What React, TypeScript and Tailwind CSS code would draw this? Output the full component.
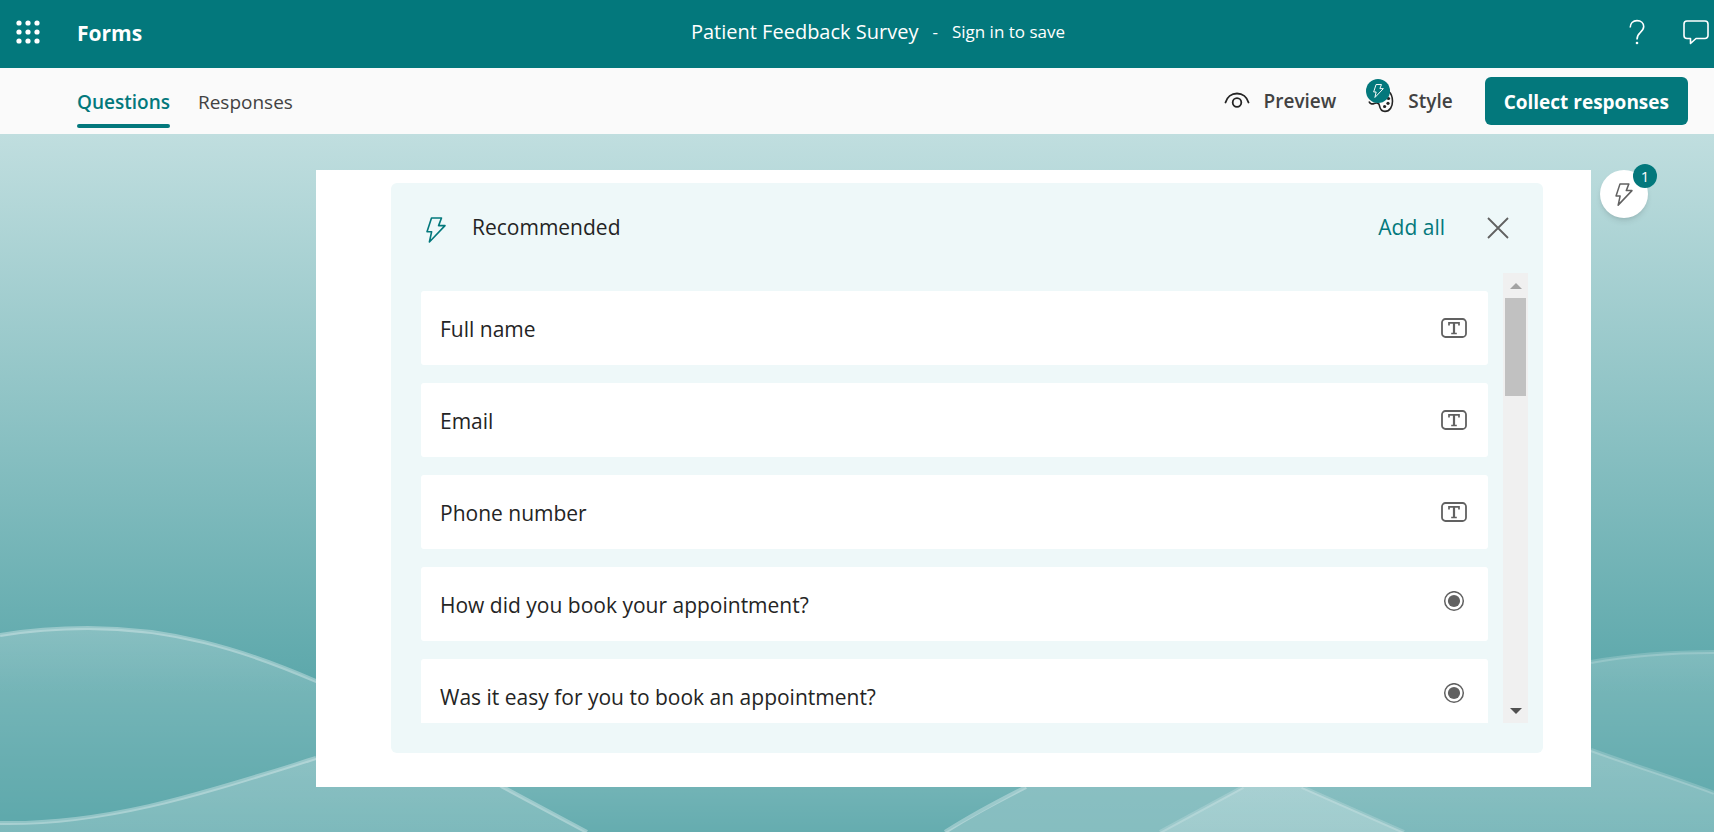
import React from "react";

type IconKind = "text" | "choice";

const questions: { label: string; kind: IconKind }[] = [
  { label: "Full name", kind: "text" },
  { label: "Email", kind: "text" },
  { label: "Phone number", kind: "text" },
  { label: "How did you book your appointment?", kind: "choice" },
  { label: "Was it easy for you to book an appointment?", kind: "choice" },
];

function Bolt({ className, strokeWidth = 1.5 }: { className: string; strokeWidth?: number }) {
  return (
    <svg viewBox="0 0 20 26" fill="none" stroke="currentColor" strokeWidth={strokeWidth} strokeLinejoin="round" className={className} aria-hidden="true">
      <path d="M5.5 1h10L12.6 8.6H19L3.4 25 5.6 14.8H1Z" />
    </svg>
  );
}

function Waffle() {
  return (
    <svg viewBox="0 0 24 24" className="size-6" fill="#fff" aria-hidden="true">
      {[3, 12, 21].map((y) => [3, 12, 21].map((x) => <circle key={`${x}-${y}`} cx={x} cy={y} r="2.6" />))}
    </svg>
  );
}

function KindIcon({ kind }: { kind: IconKind }) {
  if (kind === "text") {
    return (
      <svg viewBox="0 0 26 26" className="size-[26px] shrink-0" fill="none" stroke="#616161" aria-hidden="true">
        <rect x="1" y="4" width="24" height="18" rx="3.5" strokeWidth="1.8" />
        <path d="M8 10.500V7.900h10v2.600M10.200 18.500h5.600" strokeWidth="1.7" />
        <path d="M13 8v10.500" strokeWidth="2.2" />
      </svg>
    );
  }
  return (
    <svg viewBox="0 0 26 26" className="size-[26px] shrink-0" aria-hidden="true">
      <circle cx="13" cy="10" r="9.3" fill="none" stroke="#616161" strokeWidth="1.5" />
      <circle cx="13" cy="10" r="6.1" fill="#616161" />
    </svg>
  );
}

function Waves() {
  return (
    <svg viewBox="0 0 1714 698" preserveAspectRatio="none" className="absolute inset-0 size-full" fill="none" aria-hidden="true">
      <defs>
        <linearGradient id="sky" x1="0" y1="0" x2="0" y2="1">
          <stop offset="0" stopColor="#c0dedf" />
          <stop offset="0.8" stopColor="#5ba7aa" />
          <stop offset="1" stopColor="#5ba7aa" />
        </linearGradient>
        <linearGradient id="upper" gradientUnits="userSpaceOnUse" x1="0" y1="494" x2="0" y2="698">
          <stop offset="0" stopColor="#fff" stopOpacity="0.22" />
          <stop offset="1" stopColor="#fff" stopOpacity="0.01" />
        </linearGradient>
        <linearGradient id="middle" gradientUnits="userSpaceOnUse" x1="0" y1="620" x2="0" y2="710">
          <stop offset="0" stopColor="#fff" stopOpacity="0.2" />
          <stop offset="1" stopColor="#fff" stopOpacity="0.04" />
        </linearGradient>
        <linearGradient id="lower" gradientUnits="userSpaceOnUse" x1="0" y1="610" x2="0" y2="698">
          <stop offset="0" stopColor="#fff" stopOpacity="0.24" />
          <stop offset="1" stopColor="#fff" stopOpacity="0.2" />
        </linearGradient>
      </defs>
      <rect width="1714" height="698" fill="url(#sky)" />
      <path d="M0 501C30 496 60 494 88 494C170 494 240 514 316 547C390 580 450 620 503 653L587 698H0Z" fill="url(#upper)" />
      <path d="M1160 698L1243 653C1340 580 1470 546 1591 528C1630 521 1670 518 1714 518V698Z" fill="url(#upper)" />
      <path d="M503 653L560 600H980L1026 653L945 698H587Z" fill="url(#middle)" />
      <path d="M0 689C110 691 210 657 316 624C400 600 450 620 503 653L587 698H0Z" fill="url(#lower)" />
      <path d="M945 698L1026 653C1110 600 1220 600 1302 653L1404 698Z" fill="url(#lower)" />
      <path d="M1026 653C1110 600 1220 600 1302 653L1404 698H945Z" fill="#fff" fillOpacity="0.08" />
      <path d="M1160 698L1243 653C1350 570 1480 575 1591 616C1635 632 1680 646 1714 659V698Z" fill="url(#lower)" />
      <g stroke="#fff" strokeOpacity="0.32" strokeWidth="4">
        <path d="M0 501C30 496 60 494 88 494C170 494 240 514 316 547C390 580 450 620 503 653L587 698" />
        <path d="M0 689C110 691 210 657 316 624" />
        <path d="M945 698C970 682 998 667 1026 653" />
      </g>
      <g stroke="#fff" strokeOpacity="0.18" strokeWidth="4">
        <path d="M1160 698L1243 653" />
        <path d="M1302 653L1404 698" />
        <path d="M1591 528C1630 521 1670 518 1714 518" />
        <path d="M1591 616C1635 632 1680 646 1714 659" />
      </g>
    </svg>
  );
}

function Header() {
  return (
    <header className="grid h-17 grid-cols-[1fr_auto_1fr] items-center bg-[#03787c] pb-1 text-white">
      <div className="flex items-center gap-[37px] pl-4">
        <button type="button" aria-label="App launcher">
          <Waffle />
        </button>
        <a href="#forms" className="pt-1 text-[21px] font-bold">Forms</a>
      </div>
      <div className="flex items-center gap-[14px] pl-[42px]">
        <h1 className="text-[20px]">Patient Feedback Survey</h1>
        <span className="text-[17px]">-</span>
        <a href="#signin" className="text-[17px]">Sign in to save</a>
      </div>
      <div className="flex items-center justify-end gap-[38px] pr-[5px]">
        <button type="button" aria-label="Help">
          <svg viewBox="0 0 16 26" className="h-[26px] w-4" fill="none" stroke="#fff" strokeWidth="1.6" aria-hidden="true">
            <path d="M1.2 8.6C1.2 4.2 4 1.6 8 1.6c4 0 6.700 2.400 6.700 6 0 3-1.700 4.500-3.700 6.200C9 15.500 8 16.700 8 20.500" />
            <circle cx="8" cy="24" r="1.3" fill="#fff" stroke="none" />
          </svg>
        </button>
        <button type="button" aria-label="Feedback">
          <svg viewBox="0 0 26 26" className="size-[26px]" fill="none" stroke="#fff" strokeWidth="1.6" strokeLinejoin="round" aria-hidden="true">
            <path d="M4 2h18a3 3 0 0 1 3 3v11.500a3 3 0 0 1-3 3h-9L7.500 24.500v-5H4a3 3 0 0 1-3-3V5a3 3 0 0 1 3-3Z" />
          </svg>
        </button>
      </div>
    </header>
  );
}

function Toolbar() {
  return (
    <div className="flex h-[66px] items-center justify-between bg-[#fafafa] pr-[26px] pl-[77px]">
      <nav className="flex h-full gap-7 text-[19px]">
        <a href="#questions" className="flex h-[60px] flex-col justify-between pt-5 leading-7 font-semibold text-[#03787c]">
          Questions
          <span className="h-1 rounded-full bg-[#03787c]" />
        </a>
        <a href="#responses" className="pt-5 leading-7 text-[#424242]">Responses</a>
      </nav>
      <div className="flex items-center text-[19px] font-semibold text-[#424242]">
        <button type="button" className="mr-[30px] flex items-center gap-[14px]">
          <svg viewBox="0 0 26 18" className="h-[18px] w-[26px]" fill="none" stroke="#242424" strokeWidth="1.8" strokeLinecap="round" aria-hidden="true">
            <path d="M1.500 10.500C3 5 7.500 1.500 13 1.500s10 3.500 11.500 9" />
            <circle cx="13" cy="10.500" r="4.300" />
          </svg>
          Preview
        </button>
        <button type="button" className="mr-8 flex items-center gap-[14px]">
          <span className="relative mb-2 block h-9 w-7">
            <svg viewBox="0 0 28 36" className="h-9 w-7" fill="none" stroke="#242424" strokeWidth="1.6" aria-hidden="true">
              <path d="M3 22.500c.8 2.200 3 2.900 5.200 1.900 2.400-1 4.800-.4 5.200 2 .5 3 1.800 6 5.600 6 5 0 7.500-5 7.500-10.200 0-4-1.200-7.600-4-10.200" />
              <g fill="#242424" stroke="none">
                <circle cx="22.500" cy="19.500" r="1.600" />
                <circle cx="22" cy="24.300" r="1.600" />
                <circle cx="18.600" cy="27.500" r="1.600" />
              </g>
            </svg>
            <span className="absolute top-0 left-0 flex size-6 items-center justify-center rounded-full bg-[#03787c] text-white">
              <Bolt className="h-[14px] w-[11px]" strokeWidth={1.8} />
            </span>
          </span>
          Style
        </button>
        <button type="button" className="h-12 rounded-md bg-[#03787c] px-[19px] pt-[2px] text-[19px] font-bold text-white">
          Collect responses
        </button>
      </div>
    </div>
  );
}

function Scrollbar() {
  return (
    <div className="flex w-[25px] flex-col bg-[#f0f0f0]" aria-hidden="true">
      <div className="flex h-[25px] items-center justify-center">
        <svg viewBox="0 0 12 6" className="h-[6px] w-3" fill="#a3a3a3"><path d="M0 6 6 0l6 6Z" /></svg>
      </div>
      <div className="mx-[2px] h-[98px] bg-[#c1c1c1]" />
      <div className="mt-auto flex h-[25px] items-center justify-center">
        <svg viewBox="0 0 12 6" className="h-[6px] w-3" fill="#505050"><path d="M0 0h12L6 6Z" /></svg>
      </div>
    </div>
  );
}

function Recommended() {
  return (
    <section className="rounded-md bg-[#eef8f9] pr-[15px] pb-[30px] pl-[30px]">
      <div className="flex h-[90px] items-center pr-[19px] pl-[5px]">
        <Bolt className="mt-1 h-[26px] w-5 text-[#03787c]" strokeWidth={1.6} />
        <h2 className="ml-[26px] text-[21px] text-[#242424]">Recommended</h2>
        <button type="button" className="ml-auto text-[21px] text-[#03787c]">Add all</button>
        <button type="button" aria-label="Close" className="ml-[42px]">
          <svg viewBox="0 0 22 22" className="size-[22px]" stroke="#616161" strokeWidth="1.8" aria-hidden="true">
            <path d="M1 1l20 20M21 1L1 21" />
          </svg>
        </button>
      </div>
      <div className="flex h-[450px] gap-[15px]">
        <ul className="flex flex-1 flex-col gap-[18px] overflow-hidden pt-[18px]">
          {questions.map((q) => (
            <li key={q.label} className="shrink-0">
              <button type="button" className="flex h-[74px] w-full items-center justify-between rounded-[3px] bg-white pr-[21px] pl-[19px] text-left text-[21px] text-[#242424]">
                <span className="pt-[3px]">{q.label}</span>
                <KindIcon kind={q.kind} />
              </button>
            </li>
          ))}
        </ul>
        <Scrollbar />
      </div>
    </section>
  );
}

export default function App() {
  return (
    <div className="flex min-h-screen flex-col font-['Open_Sans','Noto_Sans',sans-serif]">
      <Header />
      <Toolbar />
      <main className="relative flex-1 pt-9 pb-[45px]">
        <Waves />
        <div className="relative flex items-start pl-[316px]">
          <div className="flex-1 bg-white pt-[13px] pr-12 pb-[34px] pl-[75px]">
            <Recommended />
          </div>
          <aside className="w-[123px] pl-[9px]">
            <button type="button" aria-label="1 suggestion" className="relative flex size-12 items-center justify-center rounded-full bg-white text-[#616161] shadow-md">
              <Bolt className="h-[23px] w-[18px]" strokeWidth={1.7} />
              <span className="absolute -top-[6px] left-[33px] flex size-6 items-center justify-center rounded-full bg-[#03787c] text-[15px] text-white">1</span>
            </button>
          </aside>
        </div>
      </main>
    </div>
  );
}
